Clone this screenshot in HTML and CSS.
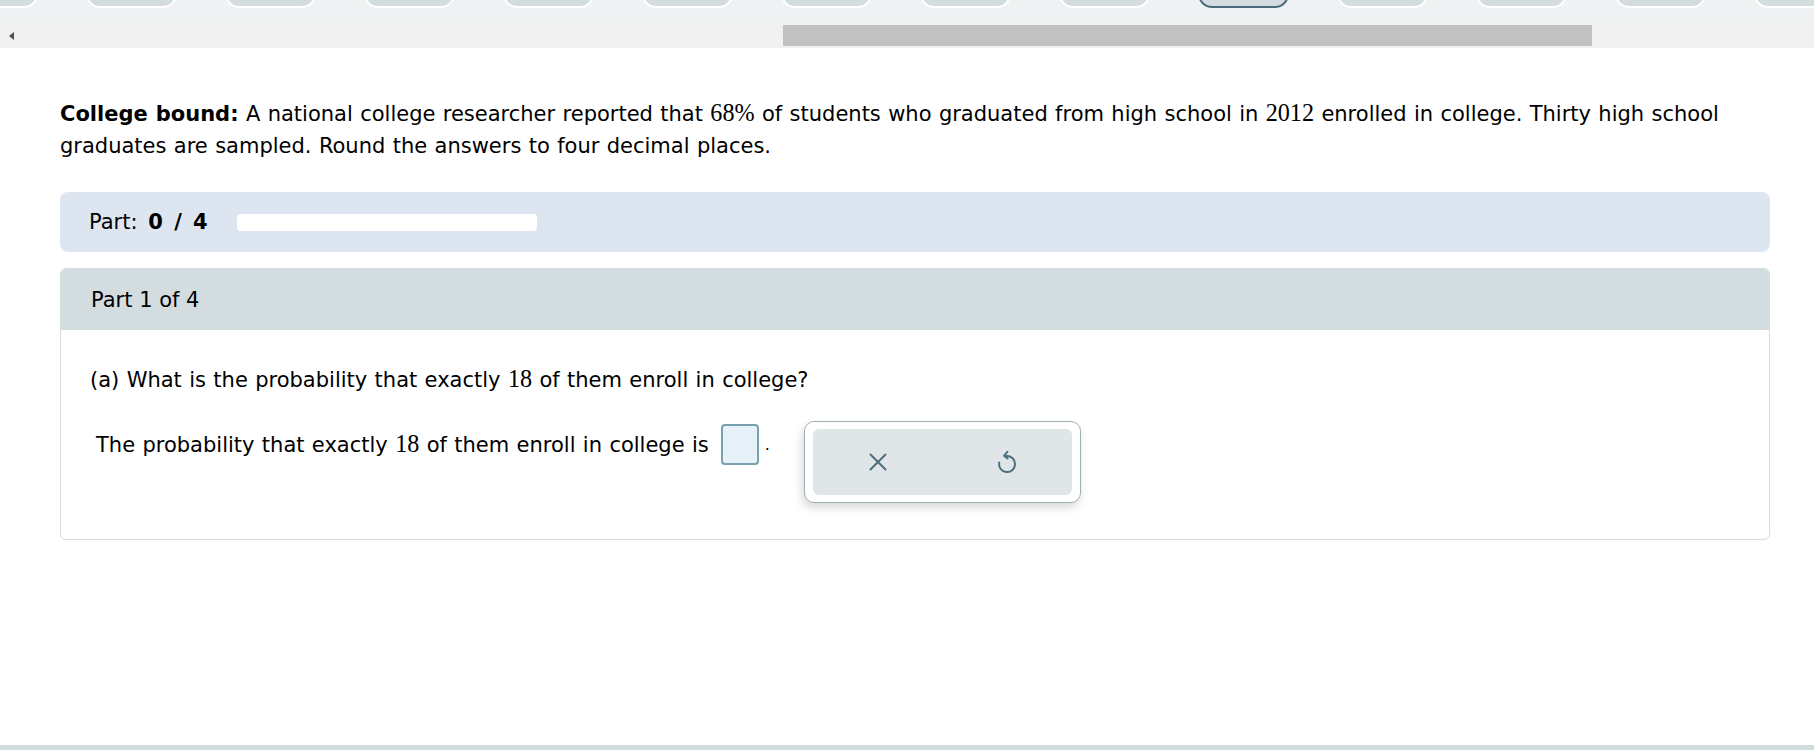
FILE: index.html
```html
<!DOCTYPE html>
<html lang="en">
<head>
    <meta charset="UTF-8">
    <title>College bound</title>
    <link rel="stylesheet" href="styles.css">
</head>
<body>
    <div class="tabbar">
        <div class="tabs">
            <span class="tab"></span>
            <span class="tab"></span>
            <span class="tab"></span>
            <span class="tab"></span>
            <span class="tab"></span>
            <span class="tab"></span>
            <span class="tab"></span>
            <span class="tab"></span>
            <span class="tab"></span>
            <span class="tab active"></span>
            <span class="tab"></span>
            <span class="tab"></span>
            <span class="tab"></span>
            <span class="tab"></span>
        </div>
    </div>
    <div class="hscroll">
        <span class="arrow"></span>
        <span class="thumb"></span>
    </div>

    <main class="content">
        <p class="intro"><b>College bound:</b> A national college researcher reported that <span class="math">68%</span> of students who graduated from high school in <span class="math">2012</span> enrolled in college. Thirty high school graduates are sampled. Round the answers to four decimal places.</p>

        <div class="progress">
            <span class="progress-label">Part: <b>0 / 4</b></span>
            <span class="progress-track"></span>
        </div>

        <div class="part">
            <div class="part-head">Part 1 of 4</div>
            <div class="part-body">
                <p class="question">(a) What is the probability that exactly <span class="math">18</span> of them enroll in college?</p>
                <div class="answer-row">
                    <div class="answer-line">
                        <span>The probability that exactly <span class="math">18</span> of them enroll in college is</span>
                        <span class="answer-box"></span>
                        <span class="dot">.</span>
                    </div>
                    <div class="tools">
                        <div class="tools-inner">
                            <button class="tool" title="Clear">
                                <svg width="18" height="18" viewBox="0 0 18 18" fill="none" stroke="currentColor" stroke-width="2" stroke-linecap="round">
                                    <path d="M1.5 1.5 L16.5 16.5 M16.5 1.5 L1.5 16.5"/>
                                </svg>
                            </button>
                            <button class="tool" title="Undo">
                                <svg width="24" height="24" viewBox="0 0 24 24" fill="none" stroke="currentColor" stroke-width="2" stroke-linecap="round" stroke-linejoin="round">
                                    <path d="M11.2 6.1 A8 8 0 1 1 4.2 12.5"/>
                                    <path d="M12.4 1.8 L9 5.8 L12.6 8.4"/>
                                </svg>
                            </button>
                        </div>
                    </div>
                </div>
            </div>
        </div>
    </main>

    <div class="footer"></div>
</body>
</html>
```

FILE: styles.css
```css
html, body {
    height: 100%;
}
body {
    margin: 0;
    display: flex;
    flex-direction: column;
    font-family: "DejaVu Sans", Verdana, sans-serif;
    font-size: 21px;
    color: #000;
    background: #fff;
}
.tabbar {
    height: 23px;
    background: #eef2f3;
    overflow: hidden;
    flex-shrink: 0;
}
.tabs {
    display: flex;
    gap: 48px;
    margin-left: -53px;
}
.tab {
    flex-shrink: 0;
    width: 87px;
    height: 28px;
    margin-top: -24px;
    background: #d3dcdf;
    border: 2px solid #fff;
    border-radius: 14px;
}
.tab.active {
    border-color: #4a6b7a;
}
.hscroll {
    height: 25px;
    background: #f1f1f1;
    display: flex;
    align-items: center;
    flex-shrink: 0;
}
.arrow {
    width: 0;
    height: 0;
    margin-left: 9px;
    border-top: 4px solid transparent;
    border-bottom: 4px solid transparent;
    border-right: 5px solid #505050;
}
.thumb {
    width: 809px;
    height: 21px;
    margin-left: 769px;
    background: #c1c1c1;
}
.content {
    flex: 1;
    padding: 50px 44px 0 60px;
}
.intro {
    margin: 0;
    line-height: 32px;
    word-spacing: 0.7px;
}
.math {
    font-family: "Liberation Serif", "Times New Roman", serif;
    font-size: 1.15em;
    line-height: 1;
}
.progress {
    margin-top: 30px;
    height: 60px;
    background: #dde6f0;
    border-radius: 8px;
    padding-left: 29px;
    display: flex;
    align-items: center;
    gap: 29px;
}
.progress-label {
    word-spacing: 4px;
}
.progress-track {
    width: 300px;
    height: 17px;
    background: #fff;
    border-radius: 4px;
}
.part {
    margin-top: 16px;
    border: 1px solid #d3dcdf;
    border-radius: 6px;
    overflow: hidden;
}
.part-head {
    height: 61px;
    background: #d3dcdf;
    padding-left: 30px;
    display: flex;
    align-items: center;
}
.part-body {
    padding: 34px 29px 36px;
}
.question {
    margin: 0;
    line-height: 32px;
    word-spacing: 0.7px;
}
.answer-row {
    display: flex;
    align-items: flex-start;
    margin-top: 25px;
    padding-left: 6px;
}
.answer-line {
    display: flex;
    align-items: center;
    margin-top: 3px;
    word-spacing: 0.7px;
}
.answer-box {
    width: 34px;
    height: 37px;
    margin-left: 12px;
    background: #e6f2f8;
    border: 2px solid #76a0ad;
    border-radius: 4px;
}
.dot {
    margin-left: 6px;
    font-size: 16px;
}
.tools {
    margin-left: 34px;
    width: 259px;
    padding: 7px 8px;
    border: 1px solid #9fb0b8;
    border-radius: 10px;
    background: #fff;
    box-shadow: -2px 5px 10px rgba(0, 0, 0, 0.15);
}
.tools-inner {
    display: flex;
    height: 66px;
    background: #e0e5e8;
    border-radius: 6px;
}
.tool {
    flex: 1;
    border: none;
    background: none;
    color: #4d6e7c;
    display: flex;
    align-items: center;
    justify-content: center;
    cursor: pointer;
    padding: 0;
}
.footer {
    height: 5px;
    background: #d3dcdf;
    flex-shrink: 0;
}
```
